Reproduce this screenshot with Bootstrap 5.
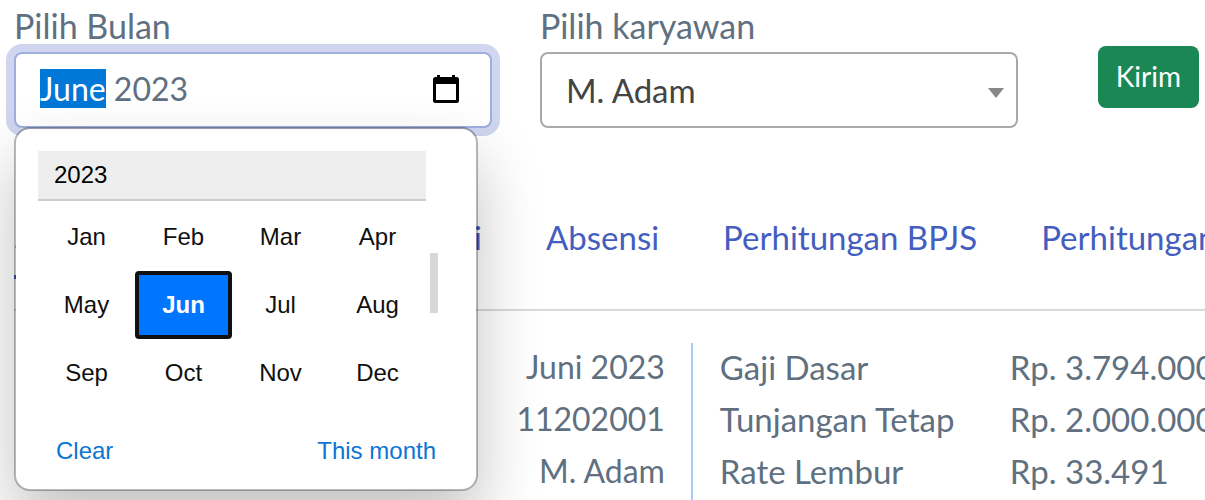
<!DOCTYPE html>
<html lang="en">
<head>
<meta charset="utf-8">
<meta name="viewport" content="width=device-width, initial-scale=1">
<title>Slip Gaji</title>
<link href="https://cdn.jsdelivr.net/npm/bootstrap@5.3.0/dist/css/bootstrap.min.css" rel="stylesheet">
<style>
  body { font-family: Lato, sans-serif; font-size: 33px; line-height: 40px; color: #607080; background: #fff; }
  .page { min-height: 100vh; padding: 6px 0 0 14px; }
  .filters { gap: 48px; padding-right: 6px; }
  .filter-item { flex: 1 1 0; }
  .filters .form-label { font-size: 34px; line-height: 40px; margin-bottom: 6px; }
  .field { height: 76px; border: 2px solid #a9a9a9; border-radius: 8px; padding: 0 24px; font-size: 33px; line-height: 40px; }
  .month-field, .month-field:focus { font-size: 32px; color: #607080; border-color: #9fafdf; box-shadow: 0 0 0 8px #d0d6ef; padding-bottom: 4px; }
  .month-field::selection { background: #0078d7; color: #fff; }
  .calendar-btn { top: 68px; right: 32px; width: 28px; height: 30px; padding: 0; border: 0; background: none; line-height: 0; }
  .staff-field {
    color: #444;
    background: #fff url("data:image/svg+xml,%3Csvg xmlns='http://www.w3.org/2000/svg' viewBox='0 0 16 10'%3E%3Cpath fill='%23888' d='M0 0h16L8 10z'/%3E%3C/svg%3E") right 12px top 34px / 16px 10px no-repeat;
  }
  .send { margin-left: 32px; margin-top: 40px; height: 62px; padding: 0 18px 2px; border: 0; border-radius: 8px; font-size: 28px; background: #1b8755; }

  .picker { top: 100%; left: 0; z-index: 10; width: 464px; padding: 22px; margin-top: -1px; background: #fff; background-clip: padding-box;
    border: 2px solid rgba(0,0,0,.28); border-radius: 16px; box-shadow: 0 32px 64px rgba(0,0,0,.24);
    font-family: "Liberation Sans", Arial, sans-serif; font-size: 24px; line-height: 28px; }
  .picker button { border: 0; background: none; padding: 0; color: #101010; }
  .picker .year { width: 388px; height: 50px; padding: 0 16px; background: #eee; color: #000; border-bottom: 2px solid #ccc; text-align: left; }
  .months { display: grid; grid-template-columns: repeat(4, 97px); grid-auto-rows: 68px; margin-top: 2px; }
  .picker .months .chosen { background: #0075ff; color: #fff; font-weight: 700; border: 4px solid #101010; border-radius: 4px; }
  .thumb { width: 8px; height: 60px; margin: 102px 0 0 4px; background: #d8d8d8; }
  .picker .actions { padding: 30px 18px 2px; }
  .picker .actions button { color: #0d75d2; }

  .tabs { margin-top: 70px; height: 113px; border-bottom: 2px solid #d4dade; }
  .tabs .nav-link { flex-shrink: 0; padding: 19px 32px; white-space: nowrap; color: #435ebe; line-height: 40px; height: 81px; }
  .tabs .nav-link.active { width: 200px; padding-left: 0; border-bottom: 4px solid #435ebe; }
  .tabs .nav-link.wide { width: 300px; text-align: right; }
  .summary { margin-top: 32px; }
  .identity { flex: 0 0 57%; border-right: 2px solid #a6cbf7; padding-right: 26px; font-size: 32px; }
  .pay { padding-left: 27px; }
  .summary td { padding: 0 0 4px; height: 52px; white-space: nowrap; }
  .pay td:first-child { width: 290px; min-width: 290px; }
</style>
</head>
<body>
<main class="page d-flex flex-column overflow-hidden">
  <form class="filters d-flex align-items-start">
    <div class="filter-item position-relative">
      <label class="form-label d-block" for="bulan">Pilih Bulan</label>
      <input class="form-control field month-field" type="text" id="bulan" value="June 2023" autocomplete="off">
      <button type="button" class="calendar-btn position-absolute" aria-label="Open calendar">
        <svg width="28" height="30" viewBox="0 0 28 30"><path fill-rule="evenodd" d="M5 1h3v2h12V1h3v2h1.500a2.500 2.500 0 0 1 2.500 2.500v21a2.500 2.500 0 0 1-2.500 2.500h-21A2.500 2.500 0 0 1 1 26.500v-21A2.500 2.500 0 0 1 3.500 3H5zM4 10v16h20V10z"/></svg>
      </button>
      <div class="picker position-absolute">
        <div class="d-flex align-items-start">
          <div>
            <button type="button" class="year d-block">2023</button>
            <div class="months">
              <button type="button">Jan</button><button type="button">Feb</button><button type="button">Mar</button><button type="button">Apr</button>
              <button type="button">May</button><button type="button" class="chosen">Jun</button><button type="button">Jul</button><button type="button">Aug</button>
              <button type="button">Sep</button><button type="button">Oct</button><button type="button">Nov</button><button type="button">Dec</button>
            </div>
          </div>
          <div class="thumb"></div>
        </div>
        <div class="actions d-flex justify-content-between">
          <button type="button">Clear</button>
          <button type="button">This month</button>
        </div>
      </div>
    </div>
    <div class="filter-item">
      <label class="form-label d-block" for="karyawan">Pilih karyawan</label>
      <select class="form-select field staff-field" id="karyawan"><option>M. Adam</option></select>
    </div>
    <button type="button" class="send btn btn-success">Kirim</button>
  </form>

  <nav class="tabs nav flex-nowrap">
    <a class="nav-link active" href="#slip">Slip</a>
    <a class="nav-link wide" href="#gaji">Gaji</a>
    <a class="nav-link" href="#absensi">Absensi</a>
    <a class="nav-link" href="#bpjs">Perhitungan BPJS</a>
    <a class="nav-link" href="#perhitungan">Perhitungan</a>
  </nav>

  <section class="summary d-flex flex-grow-1">
    <div class="identity">
      <table class="w-100 text-end">
        <tbody>
          <tr><td>Juni 2023</td></tr>
          <tr><td>11202001</td></tr>
          <tr><td>M. Adam</td></tr>
        </tbody>
      </table>
    </div>
    <div class="pay">
      <table>
        <tbody>
          <tr><td>Gaji Dasar</td><td>Rp. 3.794.000</td></tr>
          <tr><td>Tunjangan Tetap</td><td>Rp. 2.000.000</td></tr>
          <tr><td>Rate Lembur</td><td>Rp. 33.491</td></tr>
        </tbody>
      </table>
    </div>
  </section>
</main>
<script src="https://cdn.jsdelivr.net/npm/bootstrap@5.3.0/dist/js/bootstrap.bundle.min.js"></script>
<script>
  const month = document.getElementById('bulan');
  month.focus();
  month.setSelectionRange(0, 4);
</script>
</body>
</html>
